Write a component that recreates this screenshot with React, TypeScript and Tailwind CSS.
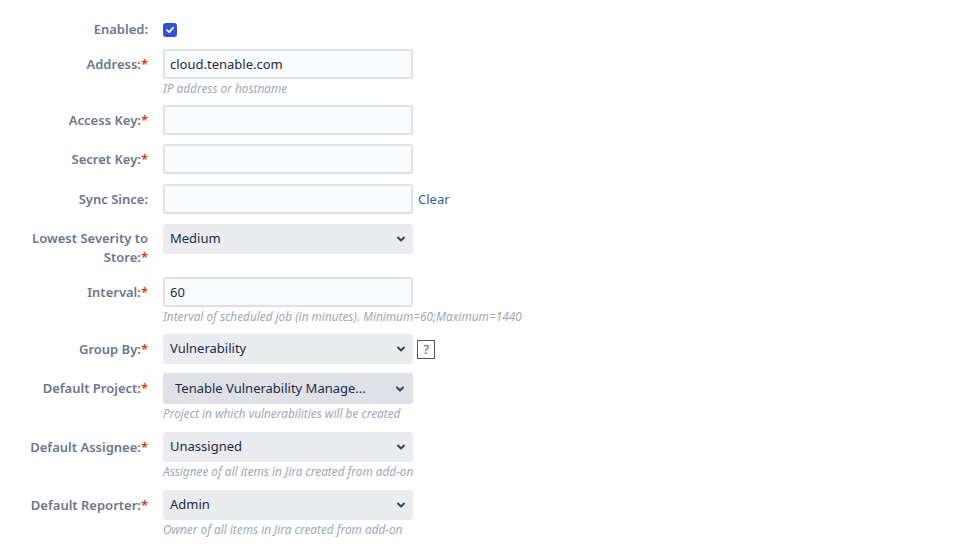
import React from "react";

const Chevron = () => (
  <svg width="10" height="10" viewBox="0 0 10 10" className="shrink-0">
    <path d="M2 3.5 L5 6.5 L8 3.5" fill="none" stroke="#344563" strokeWidth="2" strokeLinecap="round" strokeLinejoin="round" />
  </svg>
);

function Label({ text, req = false, twoLine = false }: { text: string; req?: boolean; twoLine?: boolean }) {
  return (
    <div className={`w-[130px] shrink-0 text-right text-[13px] font-semibold leading-[19px] text-[#6b778c] ${twoLine ? "pt-[5px]" : ""}`}>
      {text}
      {req && <span className="text-[#de350b]">*</span>}
    </div>
  );
}

function Helper({ text }: { text: string }) {
  return <div className="mt-[2px] text-[11.8px] italic leading-[15px] text-[#a0a8b6]">{text}</div>;
}

function Input({ value = "" }: { value?: string }) {
  return (
    <div className="flex h-[30px] w-[250px] items-center rounded-[3px] border-2 border-[#dfe1e6] bg-[#fafbfc] px-[5px] pt-px text-[13px] text-[#172b4d]">
      {value}
    </div>
  );
}

function Select({ value, dark = false }: { value: string; dark?: boolean }) {
  return (
    <div
      className={`flex w-[250px] items-center justify-between rounded-[3px] text-[13px] text-[#172b4d] ${
        dark ? "h-[31px] bg-[#dfe1e6] pl-[12px] pr-[8px]" : "h-[30px] bg-[#ebecf0] pl-[7px] pr-[7px]"
      }`}
    >
      <span>{value}</span>
      <Chevron />
    </div>
  );
}

function Row({ children, label, req, twoLine, mt }: { children: React.ReactNode; label: string; req?: boolean; twoLine?: boolean; mt: string }) {
  return (
    <div className={`flex gap-[15px] ${twoLine ? "items-start" : ""} ${mt}`}>
      <div className={twoLine ? "" : "flex h-[30px] items-center"}>
        <Label text={label} req={req} twoLine={twoLine} />
      </div>
      <div className="flex flex-col">{children}</div>
    </div>
  );
}

export default function App() {
  return (
    <div className="min-h-[544px] w-[956px] bg-white pl-[18px] pt-[20px]" style={{ fontFamily: '"Noto Sans", "Open Sans", sans-serif' }}>
      <div className="flex flex-col">
        <div className="flex h-[19px] items-center gap-[15px]">
          <Label text="Enabled:" />
          <div className="flex h-[14px] w-[14px] items-center justify-center rounded-[3px] bg-[#3451d1]">
            <svg width="10" height="10" viewBox="0 0 10 10">
              <path d="M2 5.2 L4.2 7.2 L8 2.8" fill="none" stroke="white" strokeWidth="1.8" strokeLinecap="round" strokeLinejoin="round" />
            </svg>
          </div>
        </div>

        <Row label="Address:" req mt="mt-[10px]">
          <Input value="cloud.tenable.com" />
          <Helper text="IP address or hostname" />
        </Row>

        <Row label="Access Key:" req mt="mt-[9px]">
          <Input />
        </Row>

        <Row label="Secret Key:" req mt="mt-[9px]">
          <Input />
        </Row>

        <Row label="Sync Since:" mt="mt-[10px]">
          <div className="flex items-center gap-[5px]">
            <Input />
            <span className="pt-[2px] text-[13px] text-[#3b5ba8]">Clear</span>
          </div>
        </Row>

        <Row label="Lowest Severity to Store:" req twoLine mt="mt-[10px]">
          <Select value="Medium" />
        </Row>

        <Row label="Interval:" req mt="mt-[10px]">
          <Input value="60" />
          <Helper text="Interval of scheduled job (in minutes). Minimum=60;Maximum=1440" />
        </Row>

        <Row label="Group By:" req mt="mt-[10px]">
          <div className="flex items-center gap-[4px]">
            <Select value="Vulnerability" />
            <div className="flex h-[19px] w-[18px] items-center justify-center border border-[#555] text-[13px] leading-none text-[#3b5ba8]">?</div>
          </div>
        </Row>

        <Row label="Default Project:" req mt="mt-[9px]">
          <Select value="Tenable Vulnerability Manage..." dark />
          <Helper text="Project in which vulnerabilities will be created" />
        </Row>

        <Row label="Default Assignee:" req mt="mt-[11px]">
          <Select value="Unassigned" />
          <Helper text="Assignee of all items in Jira created from add-on" />
        </Row>

        <Row label="Default Reporter:" req mt="mt-[11px]">
          <Select value="Admin" />
          <Helper text="Owner of all items in Jira created from add-on" />
        </Row>
      </div>
    </div>
  );
}
